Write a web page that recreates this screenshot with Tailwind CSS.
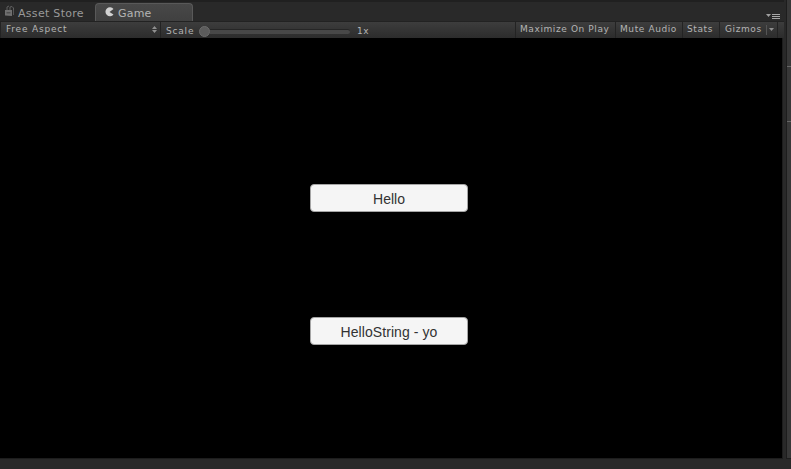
<!DOCTYPE html>
<html lang="en">
<head>
<meta charset="utf-8">
<title>Game</title>
<script src="https://cdn.jsdelivr.net/npm/@tailwindcss/browser@4"></script>
</head>
<body class="w-[791px] h-[469px] overflow-hidden bg-[#292929] flex font-['DejaVu_Sans',sans-serif] text-[#b4b4b4]">
  <div class="w-[784px] h-full flex flex-col border-t-2 border-[#202020]">
    <header class="h-[19px] flex items-end shrink-0">
      <div class="w-[95px] h-[18px] pl-[5px] flex items-start text-[11px] leading-[22px] text-[#999]">
        <svg class="w-[10px] h-[12px] mt-[2px] mr-[3px] shrink-0" viewBox="0 0 10 12" fill="none">
          <path d="M2 5V2L4 1M5 5V2L7 1.500L8.500 3V5" stroke="#606060"/>
          <path d="M0 5H7V11L0 10.500Z" fill="#707070"/>
          <path d="M1.500 7H5.500V8.500H1.500Z" fill="#505050"/>
          <path d="M8.500 5V10" stroke="#555"/>
        </svg>
        <span class="tracking-[0.3px] whitespace-nowrap">Asset Store</span>
      </div>
      <div class="w-[98px] h-[18px] rounded-t-[4px] border border-b-0 border-[#595959] bg-linear-to-b from-[#484848] to-[#404040] pl-[9px] flex items-start text-[11px] leading-[20px]">
        <svg class="w-[9px] h-[10px] mt-[3px] mr-[4px] shrink-0" viewBox="0 0 9 10"><path d="M8.500 2A4.500 4.500 0 1 0 8.500 7.500L4.500 5Z" fill="#d2d2d2"/></svg>
        <span class="tracking-[0.2px]">Game</span>
      </div>
      <svg class="w-[14px] h-[8px] ml-auto mr-[4px]" viewBox="0 0 14 8"><path d="M0 1H5L2.500 4Z" fill="#a0a0a0"/><path d="M6 1.500H14M6 3.500H14M6 5.500H14" stroke="#a8a8a8"/></svg>
    </header>
    <div class="h-[17px] shrink-0 flex items-stretch bg-linear-to-b from-[#3d3d3d] to-[#2c2c2c] border-t border-[#222] text-[9px] leading-[15px] tracking-[0.6px] whitespace-nowrap">
      <div class="w-[161px] pl-[5px] pr-[3px] border-x border-[#232323] flex items-center justify-between">
        <span class="h-full tracking-[0.8px]">Free Aspect</span>
        <svg class="w-[5px] h-[7px] -mt-px" viewBox="0 0 5 7" fill="#909090"><path d="M0 3L2.500 0L5 3ZM0 4H5L2.500 7Z"/></svg>
      </div>
      <div class="flex pl-[5px]">
        <span class="pt-[2px] w-[33px] tracking-[0.8px]">Scale</span>
        <div class="w-[151px] flex items-center pt-[2px]">
          <span class="w-[11px] h-[11px] shrink-0 rounded-full bg-[#5c5c5c] border border-[#6c6c6c]"></span>
          <span class="w-[140px] h-[5px] rounded-r-full bg-[#484848] border-t border-[#262626]"></span>
        </div>
        <span class="pt-[2px] pl-[7px]">1x</span>
      </div>
      <div class="flex ml-auto mr-[6px]">
        <span class="w-[100px] border-l border-[#232323] pl-[4px]">Maximize On Play</span>
        <span class="w-[67px] border-l border-[#232323] pl-[4px]">Mute Audio</span>
        <span class="w-[37px] border-l border-[#232323] pl-[4px]">Stats</span>
        <span class="w-[59px] border-x border-[#232323] pl-[5px] flex">
          <span class="w-[41px]">Gizmos</span>
          <span class="w-px h-[10px] mt-[3px] bg-[#555]"></span>
          <svg class="w-[5px] h-[3px] mt-[6px] ml-[2px]" viewBox="0 0 5 3"><path d="M0 0H5L2.500 3Z" fill="#909090"/></svg>
        </span>
      </div>
    </div>
    <main class="h-[421px] shrink-0 w-[783px] bg-black border-r border-b border-[#1d1d1d] pl-[310px] pt-[146px] flex flex-col gap-[105px] font-['Liberation_Sans',sans-serif] text-[14px] text-[#323232]">
      <button class="w-[158px] h-[28px] rounded-[4px] bg-[#f5f5f5] border border-[#a5a5a5] flex items-center justify-center pt-[2px]">Hello</button>
      <button class="w-[158px] h-[28px] rounded-[4px] bg-[#f5f5f5] border border-[#a5a5a5] flex items-center justify-center pt-[2px] tracking-[0.08px]">HelloString - yo</button>
    </main>
    <div class="h-[10px] bg-[#292929]"></div>
  </div>
  <div class="w-[7px] h-full flex bg-[#292929]">
    <div class="w-[2px]"></div>
    <div class="w-[5px] h-[459px] border-l border-b border-[#1d1d1d] bg-[#383838] pt-[66px] flex flex-col gap-[54px]">
      <div class="h-px bg-[#666] shrink-0"></div>
      <div class="h-px bg-[#666] shrink-0"></div>
    </div>
  </div>
</body>
</html>
